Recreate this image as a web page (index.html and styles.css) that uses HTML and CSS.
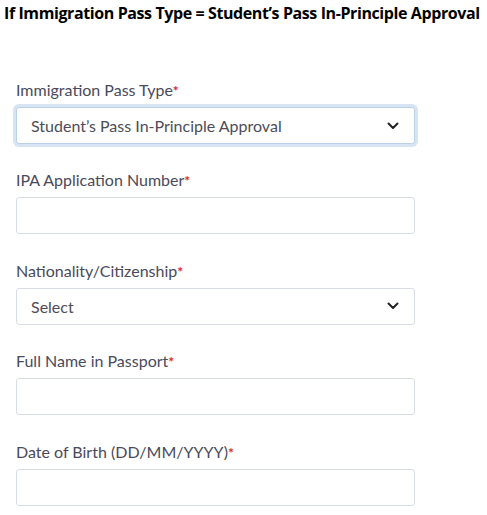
FILE: index.html
```html
<!DOCTYPE html>
<html>
<head>
<meta charset="utf-8">
<link rel="stylesheet" href="styles.css">
</head>
<body>
<h1 class="title">If Immigration Pass Type = Student’s Pass In-Principle Approval</h1>
<form class="form">
  <div class="field">
    <label class="label">Immigration Pass Type<span class="req">*</span></label>
    <div class="control select focused">
      <span class="value">Student’s Pass In-Principle Approval</span>
      <svg class="chev" viewBox="0 0 12 8" width="12" height="8"><path d="M1.5 1.5 L6 6 L10.5 1.5" fill="none" stroke="#222" stroke-width="2" stroke-linecap="round" stroke-linejoin="round"/></svg>
    </div>
  </div>
  <div class="field">
    <label class="label">IPA Application Number<span class="req">*</span></label>
    <div class="control"></div>
  </div>
  <div class="field">
    <label class="label">Nationality/Citizenship<span class="req">*</span></label>
    <div class="control select">
      <span class="value">Select</span>
      <svg class="chev" viewBox="0 0 12 8" width="12" height="8"><path d="M1.5 1.5 L6 6 L10.5 1.5" fill="none" stroke="#222" stroke-width="2" stroke-linecap="round" stroke-linejoin="round"/></svg>
    </div>
  </div>
  <div class="field">
    <label class="label">Full Name in Passport<span class="req">*</span></label>
    <div class="control"></div>
  </div>
  <div class="field">
    <label class="label">Date of Birth (DD/MM/YYYY)<span class="req">*</span></label>
    <div class="control"></div>
  </div>
</form>
</body>
</html>
```

FILE: styles.css
```css
html, body {
  margin: 0;
  padding: 0;
  background: #ffffff;
}
body {
  font-family: Lato, "Noto Sans", sans-serif;
}
.title {
  margin: 0;
  padding: 3px 0 0 4px;
  font-family: "Open Sans", "Liberation Sans", sans-serif;
  font-weight: 700;
  font-size: 16px;
  line-height: 20px;
  letter-spacing: -0.4px;
  color: #000;
  white-space: nowrap;
}
.form {
  padding: 57px 0 0 16px;
  display: flex;
  flex-direction: column;
  gap: 26.4px;
  width: 399px;
}
.field {
  display: flex;
  flex-direction: column;
  gap: 7px;
}
.label {
  display: block;
  height: 20px;
  font-size: 16px;
  line-height: 20px;
  color: #4a4a5c;
  overflow: visible;
}
.req {
  color: #e0262b;
  font-weight: 700;
  font-size: 14px;
  line-height: 1;
}
.control {
  box-sizing: border-box;
  height: 37px;
  border: 1px solid #d9dde5;
  border-radius: 3px;
  background: #fff;
}
.select {
  display: flex;
  align-items: center;
  justify-content: space-between;
  padding: 0 15px 0 14px;
}
.focused {
  border-color: #bcd1ea;
  box-shadow: 0 0 0 3px #d6e4f4;
}
.value {
  font-size: 16px;
  color: #4d4d57;
}
.chev {
  display: block;
}
```
